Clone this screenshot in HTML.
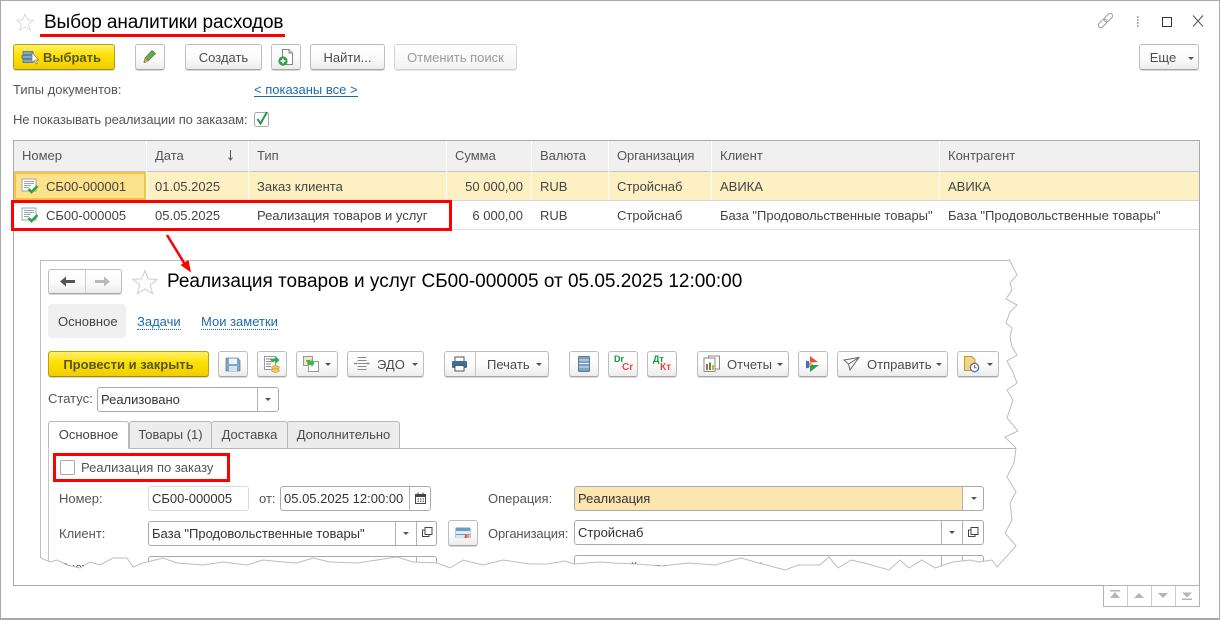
<!DOCTYPE html>
<html lang="ru"><head><meta charset="utf-8"><title>Выбор аналитики расходов</title>
<style>
*{box-sizing:border-box}
html,body{margin:0;padding:0;background:#fff}
body{width:1220px;height:620px;position:relative;overflow:hidden;font:13px/14px "Liberation Sans",Arial,sans-serif;color:#4b4b4b}
.a,.t,.b,.f,.c,.l{position:absolute}
.t{white-space:nowrap}
.b{height:26px;border:1px solid #bdbdbd;border-bottom-color:#a6a6a6;border-radius:3px;background:linear-gradient(#fff 0,#fbfbfb 55%,#ececec 100%);box-shadow:0 1px 0 #d8d8d8;text-align:center;line-height:25px;color:#4b4b4b;white-space:nowrap}
.y{border-color:#b8a112;border-bottom-color:#a08b0c;background:linear-gradient(#fff06a 0,#fee000 45%,#f3cc00 100%);font-weight:bold;color:#55552c}
.f{border:1px solid #aaa;border-radius:3px;background:#fff;height:25px;line-height:24px;padding-left:3px;color:#333;white-space:nowrap;overflow:hidden}
.c{width:1px;background:#b4b4b4}
.l{background:#d6d6d6;height:1px}
.tri{position:absolute;width:0;height:0;border-left:3px solid transparent;border-right:3px solid transparent;border-top:3px solid #555}
.th{top:149px;color:#555}
.r1{top:180px;color:#444}
.r2{top:209px;color:#444}
.tab{position:absolute;top:421px;height:28px;border:1px solid #b8b8b8;border-radius:3px 3px 0 0;background:#ececec;text-align:center;line-height:26px;color:#4b4b4b}
</style></head>
<body>
<svg width="0" height="0" style="position:absolute">
<symbol id="doc" viewBox="0 0 18 16"><rect x="1" y="1" width="14" height="12" fill="#fff" stroke="#98a4ae"/><path d="M3 3.500h10M3 5.500h10M3 7.500h7M3 9.500h5" stroke="#98a4ae"/><path d="M7.500 11l3 3L16.500 8" fill="none" stroke="#2aa63c" stroke-width="2.600"/></symbol>
<symbol id="star" viewBox="0 0 24 24"><path d="M12 1.500l3 7.600 8.200.5-6.400 5.200 2.200 8-7-4.400-7 4.400 2.200-8L.8 9.600 9 9.100z" fill="#fff" stroke="#d4d4d4" stroke-width="1.100"/></symbol>
<symbol id="popup" viewBox="0 0 12 12"><path d="M4 1.500h7v7H4zM4 4H1.500v6.500H8V8.500" fill="none" stroke="#444"/></symbol>
</svg>

<div class="a" style="left:0;top:0;width:1220px;height:620px;border:1px solid #a9a9a9;border-bottom-width:2px"></div>

<svg class="a" style="left:16px;top:13px" width="18" height="18"><use href="#star"/></svg>
<div class="t" style="left:44px;top:12px;font-size:19px;line-height:21px;color:#000;letter-spacing:-.12px">Выбор аналитики расходов</div>
<div class="a" style="left:40px;top:34px;width:245px;height:3px;background:#f00"></div>

<svg class="a" style="left:1095px;top:10px" width="115" height="22" fill="none">
<g transform="rotate(-45 10.500 10.500)" stroke="#9a9a9a"><rect x="1.500" y="8" width="10" height="5" rx="2.500"/><rect x="9.500" y="8" width="10" height="5" rx="2.500"/></g>
<path d="M42 7h1.500M42 10h1.500M42 13h1.500M42 16h1.500" stroke="#8a8a8a" stroke-width="1.400"/>
<rect x="67.500" y="7.500" width="9" height="9" stroke="#333"/>
<path d="M98 5.500l10 11M108 5.500l-10 11" stroke="#555"/>
</svg>

<!-- top toolbar -->
<div class="b y" style="left:13px;top:44px;width:102px;padding-left:16px">Выбрать</div>
<svg class="a" style="left:20px;top:49px" width="20" height="17"><path d="M3 2.500h10v3H3zM2 6.500h11v3H2zM3 10.500h10v3H3z" fill="#7fa8cc" stroke="#3f7099" stroke-width=".8"/><path d="M12 3.500v10l2.300-2 1.700 3.500 1.400-.7-1.700-3.300h3z" fill="#fff" stroke="#777" stroke-width=".7"/></svg>
<div class="b" style="left:135px;top:44px;width:30px"></div>
<svg class="a" style="left:142px;top:49px" width="16" height="16"><path d="M2 13l1-4 7-7.500 3.500 3L6 12z" fill="#6aa84f" stroke="#4d8237" stroke-width=".7"/><path d="M2 14l1-4.500L6 12.500z" fill="#e9a24a"/><path d="M2 14l.5-1.800 1.300 1.200z" fill="#555"/></svg>
<div class="b" style="left:185px;top:44px;width:77px">Создать</div>
<div class="b" style="left:271px;top:44px;width:30px"></div>
<svg class="a" style="left:277px;top:48px" width="18" height="19"><path d="M5.500 1.500H12l3.500 3.500v11.500h-10z" fill="#fff" stroke="#888"/><path d="M12 1.500V5h3.500" fill="#ddd" stroke="#888"/><circle cx="6" cy="13" r="4.600" fill="#2f9e44"/><path d="M3.500 13h5M6 10.500v5" stroke="#fff" stroke-width="1.500"/></svg>
<div class="b" style="left:310px;top:44px;width:75px">Найти...</div>
<div class="b" style="left:394px;top:44px;width:123px;color:#9c9c9c;border-color:#d2d2d2;box-shadow:0 1px 0 #e6e6e6;background:linear-gradient(#fff,#f3f3f3)">Отменить поиск</div>
<div class="b" style="left:1139px;top:44px;width:60px;padding-right:12px">Еще</div><div class="tri" style="left:1188px;top:57px"></div>

<div class="t" style="left:13px;top:83px;color:#555">Типы документов:</div>
<div class="t" style="left:254px;top:83px;color:#1c6aa8;border-bottom:1px solid #1c6aa8;line-height:13px">&lt; показаны все &gt;</div>
<div class="t" style="left:13px;top:113px;color:#555;letter-spacing:-.1px">Не показывать реализации по заказам:</div>
<svg class="a" style="left:254px;top:110px" width="17" height="18"><rect x=".5" y="2.500" width="14" height="14" rx="2" fill="#fff" stroke="#aaa"/><path d="M3.500 9l3 4.500L13 2" fill="none" stroke="#1f9a47" stroke-width="2"/></svg>

<!-- table -->
<div class="a" style="left:13px;top:140px;width:1187px;height:446px;border:1px solid #a9a9a9"></div>
<div class="a" style="left:14px;top:141px;width:1185px;height:30px;background:#f0f0f0"></div>
<div class="a" style="left:14px;top:171px;width:1185px;height:1px;background:#c6c6c6"></div>
<div class="a" style="left:14px;top:172px;width:1185px;height:28px;background:#fdf0c2"></div>
<div class="a" style="left:14px;top:172px;width:132px;height:28px;background:#fde28c;border:2px solid #f5c53f"></div>
<div class="l" style="left:14px;top:200px;width:1185px"></div>
<div class="l" style="left:14px;top:229px;width:1185px;background:#dfdfdf"></div>
<div class="a" style="left:146px;top:141px;width:1px;height:59px;background:#fff"></div>
<div class="a" style="left:248px;top:141px;width:1px;height:59px;background:#fff"></div>
<div class="a" style="left:446px;top:141px;width:1px;height:59px;background:#fff"></div>
<div class="a" style="left:531px;top:141px;width:1px;height:59px;background:#fff"></div>
<div class="a" style="left:608px;top:141px;width:1px;height:59px;background:#fff"></div>
<div class="a" style="left:711px;top:141px;width:1px;height:59px;background:#fff"></div>
<div class="a" style="left:939px;top:141px;width:1px;height:59px;background:#fff"></div>

<div class="t th" style="left:22px">Номер</div>
<div class="t th" style="left:155px">Дата</div>
<svg class="a" style="left:226px;top:149px" width="9" height="13"><path d="M4.500 1v10M2.500 8.500l2 2.500 2-2.500" fill="none" stroke="#555"/></svg>
<div class="t th" style="left:257px">Тип</div>
<div class="t th" style="left:455px">Сумма</div>
<div class="t th" style="left:540px">Валюта</div>
<div class="t th" style="left:617px;letter-spacing:-.1px">Организация</div>
<div class="t th" style="left:720px">Клиент</div>
<div class="t th" style="left:948px">Контрагент</div>

<svg class="a" style="left:21px;top:178px" width="18" height="16"><use href="#doc"/></svg>
<div class="t r1" style="left:46px">СБ00-000001</div>
<div class="t r1" style="left:155px">01.05.2025</div>
<div class="t r1" style="left:257px">Заказ клиента</div>
<div class="t r1" style="right:697px">50 000,00</div>
<div class="t r1" style="left:540px">RUB</div>
<div class="t r1" style="left:617px">Стройснаб</div>
<div class="t r1" style="left:720px">АВИКА</div>
<div class="t r1" style="left:948px">АВИКА</div>

<svg class="a" style="left:21px;top:207px" width="18" height="16"><use href="#doc"/></svg>
<div class="t r2" style="left:46px">СБ00-000005</div>
<div class="t r2" style="left:155px">05.05.2025</div>
<div class="t r2" style="left:257px">Реализация товаров и услуг</div>
<div class="t r2" style="right:697px">6 000,00</div>
<div class="t r2" style="left:540px">RUB</div>
<div class="t r2" style="left:617px">Стройснаб</div>
<div class="t r2" style="left:720px">База "Продовольственные товары"</div>
<div class="t r2" style="left:948px">База "Продовольственные товары"</div>

<div class="a" style="left:11px;top:200px;width:441px;height:31px;border:3px solid #f00"></div>

<!-- pager -->
<div class="a" style="left:1103px;top:585px;width:97px;height:22px;border:1px solid #b4b4b4;background:#fff"></div>
<div class="c" style="left:1127px;top:586px;height:20px;background:#ccc"></div>
<div class="c" style="left:1151px;top:586px;height:20px;background:#ccc"></div>
<div class="c" style="left:1175px;top:586px;height:20px;background:#ccc"></div>
<svg class="a" style="left:1104px;top:586px" width="96" height="20" fill="#b5b5b5"><path d="M6 4h10v1.500H6zM11 6l5 6H6zM35 7l5 5H30zM54 7h10l-5 5zM78 6.500h10l-5 5zM78 12.500h10V14H78z"/></svg>

<!-- inner window -->
<div class="a" id="inner" style="left:0;top:0;width:1220px;height:620px;clip-path:polygon(41px 261px,1009px 259px,1013px 267px,1017px 275px,1010px 283px,1012px 290px,1006px 299px,1017px 305px,1010px 312px,1006px 323px,1012px 328px,1010px 337px,1012px 347px,1017px 355px,1007px 361px,1013px 372px,1017px 383px,1007px 390px,1013px 400px,1007px 418px,1018px 431px,1005px 437px,1016px 448px,1014px 463px,1007px 477px,1016px 492px,1010px 503px,1012px 520px,1005px 533px,1016px 546px,997px 567px,992px 560px,979px 562px,970px 560px,953px 562px,935px 568px,922px 560px,909px 568px,900px 560px,889px 570px,864px 563px,851px 560px,838px 568px,829px 557px,820px 565px,798px 565px,785px 570px,759px 563px,741px 558px,715px 565px,688px 563px,662px 566px,636px 564px,614px 563px,600px 562px,587px 563px,574px 564px,565px 561px,548px 564px,530px 564px,503px 560px,483px 565px,463px 560px,450px 568px,437px 563px,413px 562px,397px 557px,377px 560px,357px 563px,330px 562px,313px 558px,297px 563px,283px 562px,263px 560px,247px 565px,223px 562px,203px 565px,177px 563px,163px 558px,143px 563px,133px 567px,127px 558px,113px 558px,100px 565px,90px 562px,80px 568px,67px 565px,57px 560px,50px 562px,41px 558px)">
<div class="a" style="left:0;top:0;width:1220px;height:620px;background:#fff"></div>

<div class="b" style="left:48px;top:269px;width:74px;height:25px"></div>
<div class="c" style="left:85px;top:270px;height:23px;background:#ccc"></div>
<svg class="a" style="left:58px;top:275px" width="60" height="13"><path d="M2 6.500l6-5v3.500h9v3H8v3.500z" fill="#555"/><path d="M52 6.500l-6-5v3.500h-9v3h9v3.500z" fill="#b8b8b8"/></svg>
<svg class="a" style="left:132px;top:269px" width="26" height="26"><use href="#star"/></svg>
<div class="t" style="left:167px;top:271px;font-size:19px;line-height:22px;color:#000">Реализация товаров и услуг СБ00-000005 от 05.05.2025 12:00:00</div>

<div class="a" style="left:48px;top:304px;width:78px;height:34px;background:#f0f0f0;border-radius:4px"></div>
<div class="t" style="left:58px;top:315px;color:#444">Основное</div>
<div class="t" style="left:137px;top:315px;color:#1c6aa8;border-bottom:1px dotted #1c6aa8">Задачи</div>
<div class="t" style="left:201px;top:315px;color:#1c6aa8;border-bottom:1px dotted #1c6aa8">Мои заметки</div>

<!-- doc toolbar -->
<div class="b y" style="left:48px;top:351px;width:161px">Провести и закрыть</div>
<div class="b" style="left:218px;top:351px;width:30px"></div>
<svg class="a" style="left:225px;top:356px" width="16" height="16"><path d="M1 2h11.500L15 4.500V15H1z" fill="#7ea6c9" stroke="#5a86ab" stroke-width=".8"/><rect x="4" y="2.500" width="8" height="5.500" fill="#eef3f8"/><rect x="4" y="10" width="8" height="5" fill="#d7e1ea"/></svg>
<div class="b" style="left:257px;top:351px;width:30px"></div>
<svg class="a" style="left:263px;top:355px" width="18" height="19"><rect x="1.500" y="1.500" width="11" height="13" fill="#fff" stroke="#999"/><path d="M3 4h8M3 6.500h8M3 9h5M3 11.500h5" stroke="#888"/><ellipse cx="12.500" cy="12.500" rx="4" ry="1.800" fill="#f0c95a" stroke="#c09b2c" stroke-width=".6"/><ellipse cx="12.500" cy="15.500" rx="4" ry="1.800" fill="#f0c95a" stroke="#c09b2c" stroke-width=".6"/><path d="M6 3.500h6.500V1l4 4-4 4V6.500H9" fill="#2fae56"/></svg>
<div class="b" style="left:296px;top:351px;width:42px"></div>
<svg class="a" style="left:302px;top:355px" width="18" height="18"><rect x="1.500" y="1.500" width="9" height="9" fill="#f1e6c4" stroke="#999"/><rect x="6.500" y="6.500" width="10" height="10" fill="#fff" stroke="#999"/><path d="M4 5h4l1.500 2V4l3 4-3 4.500V10H6z" fill="#3cb54a"/></svg>
<div class="tri" style="left:325px;top:363px"></div>
<div class="b" style="left:347px;top:351px;width:77px"></div><div class="t" style="left:377px;top:358px">ЭДО</div>
<svg class="a" style="left:353px;top:356px" width="17" height="16" fill="none" stroke="#8a8a8a"><path d="M4.500 1.500h9M4.500 4.500h9M4.500 7.500h9M4.500 10.500h9M4.500 13.500h9"/><path d="M1 7.500h3M13.500 7.500h3" stroke-width="1.500"/></svg>
<div class="tri" style="left:412px;top:363px"></div>
<div class="b" style="left:444px;top:351px;width:105px"></div><div class="t" style="left:487px;top:358px">Печать</div>
<div class="c" style="left:475px;top:352px;height:24px;background:#c6c6c6"></div>
<svg class="a" style="left:451px;top:356px" width="17" height="16"><rect x="4" y="1" width="9" height="5" fill="#fff" stroke="#555"/><rect x="1" y="5" width="15" height="7" rx="1" fill="#3e6f98"/><rect x="4" y="9.500" width="9" height="5.500" fill="#fff" stroke="#555"/></svg>
<div class="tri" style="left:536px;top:363px"></div>
<div class="b" style="left:569px;top:351px;width:30px"></div>
<svg class="a" style="left:578px;top:356px" width="12" height="16"><rect x=".5" y=".5" width="11" height="15" rx="1" fill="#7fa2bd" stroke="#54799a"/><path d="M1 4h10M1 7.500h10M1 11h10" stroke="#dfe9f1"/></svg>
<div class="b" style="left:608px;top:351px;width:30px"></div>
<div class="t" style="left:614px;top:354px;font-size:9px;line-height:10px;font-weight:bold;color:#0f9b3c">Dr</div>
<div class="t" style="left:622px;top:362px;font-size:10px;line-height:11px;font-weight:bold;color:#f04545">Cr</div>
<div class="b" style="left:647px;top:351px;width:30px"></div>
<div class="t" style="left:653px;top:354px;font-size:9px;line-height:10px;font-weight:bold;color:#0f9b3c">Дт</div>
<div class="t" style="left:660px;top:362px;font-size:10px;line-height:11px;font-weight:bold;color:#f04545">Кт</div>
<div class="b" style="left:697px;top:351px;width:92px"></div><div class="t" style="left:727px;top:358px">Отчеты</div>
<svg class="a" style="left:703px;top:355px" width="18" height="18"><rect x="5.500" y="1" width="11" height="13" fill="#fff" stroke="#8a8a8a"/><rect x="1" y="3" width="11" height="13.500" fill="#fff" stroke="#8a8a8a"/><rect x="3" y="9" width="2" height="6" fill="#e0533d"/><rect x="6" y="7.500" width="2" height="7.500" fill="#2ca24b"/><rect x="9" y="10" width="2" height="5" fill="#e8a53a"/></svg>
<div class="tri" style="left:777px;top:363px"></div>
<div class="b" style="left:798px;top:351px;width:30px"></div>
<svg class="a" style="left:805px;top:355px" width="16" height="18"><path d="M5 1l8 6-8 .5z" fill="#ef4e3a"/><path d="M1 5.500l7 4-7 4z" fill="#7b46c2"/><path d="M5 10h9l-9 7z" fill="#24a14f"/><path d="M4 7l4 2.500-4 2.500z" fill="#f0a02c"/><path d="M1 6h3v7H1z" fill="#2f74c8" opacity=".85"/></svg>
<div class="b" style="left:837px;top:351px;width:111px"></div><div class="t" style="left:867px;top:358px">Отправить</div>
<svg class="a" style="left:843px;top:356px" width="18" height="16" fill="none" stroke="#666"><path d="M1 4l15-2.500L7 14 5.500 8zM5.500 8L16 1.500"/></svg>
<div class="tri" style="left:936px;top:363px"></div>
<div class="b" style="left:957px;top:351px;width:42px"></div>
<svg class="a" style="left:963px;top:355px" width="18" height="18"><path d="M1.500 1.500h7.500l3 3v11H1.500z" fill="#f0d682" stroke="#bd9c3b"/><circle cx="11.500" cy="12.500" r="4.200" fill="#fff" stroke="#4a75a8" stroke-width="1.300"/><path d="M11.500 10v2.700h2" stroke="#d8453a" fill="none"/></svg>
<div class="tri" style="left:987px;top:363px"></div>

<div class="t" style="left:48px;top:392px;color:#555">Статус:</div>
<div class="f" style="left:97px;top:387px;width:182px">Реализовано</div>
<div class="c" style="left:257px;top:388px;height:23px"></div>
<div class="tri" style="left:265px;top:398px"></div>

<!-- tabs -->
<div class="a" style="left:48px;top:448px;width:972px;height:1px;background:#b8b8b8"></div>
<div class="a" style="left:48px;top:448px;width:1px;height:120px;background:#c4c4c4"></div>
<div class="tab" style="left:129px;width:83px">Товары (1)</div>
<div class="tab" style="left:211px;width:77px">Доставка</div>
<div class="tab" style="left:287px;width:113px">Дополнительно</div>
<div class="tab" style="left:48px;width:81px;background:#fff;border-bottom-color:#fff;z-index:2;color:#444">Основное</div>

<div class="a" style="left:60px;top:460px;width:15px;height:15px;border:1px solid #aaa;border-radius:2px;background:#fff"></div>
<div class="t" style="left:81px;top:461px;color:#555">Реализация по заказу</div>
<div class="a" style="left:53px;top:453px;width:177px;height:29px;border:3px solid #f00"></div>

<div class="t" style="left:59px;top:492px;color:#555">Номер:</div>
<div class="f" style="left:148px;top:486px;width:101px;border-color:#dadada">СБ00-000005</div>
<div class="t" style="left:259px;top:492px;color:#555">от:</div>
<div class="f" style="left:280px;top:486px;width:151px">05.05.2025 12:00:00</div>
<div class="c" style="left:409px;top:487px;height:23px"></div>
<svg class="a" style="left:415px;top:492px" width="12" height="12"><path d="M.5 2.500h10v9H.5z" fill="#fff" stroke="#444"/><path d="M.5 2h10v3H.5z" fill="#444"/><path d="M3 .5v2M8 .5v2" stroke="#444"/><path d="M2.500 7h1.500M5 7h1.500M7.500 7h1.500M2.500 9.300h1.500M5 9.300h1.500M7.500 9.300h1.500" stroke="#444"/></svg>

<div class="t" style="left:488px;top:492px;color:#555">Операция:</div>
<div class="f" style="left:574px;top:486px;width:410px;background:linear-gradient(90deg,#fde5b0 0,#fde5b0 388px,#fff 388px)">Реализация</div>
<div class="c" style="left:962px;top:487px;height:23px"></div>
<div class="tri" style="left:971px;top:497px"></div>

<div class="t" style="left:59px;top:527px;color:#555">Клиент:</div>
<div class="f" style="left:148px;top:521px;width:289px">База "Продовольственные товары"</div>
<div class="c" style="left:395px;top:522px;height:23px"></div>
<div class="c" style="left:416px;top:522px;height:23px"></div>
<div class="tri" style="left:403px;top:532px"></div>
<svg class="a" style="left:421px;top:526px" width="12" height="12"><use href="#popup"/></svg>
<div class="b" style="left:448px;top:520px;width:30px;height:26px"></div>
<svg class="a" style="left:455px;top:527px" width="16" height="12"><rect x=".5" y=".5" width="15" height="11" rx="1" fill="#6d9bc6"/><rect x="1" y="4" width="14" height="3" fill="#dfe9f2"/><rect x="1" y="8" width="14" height="3.500" fill="#dfe7ee"/><circle cx="11" cy="9.500" r="1.500" fill="#e0463a"/><circle cx="13" cy="9.500" r="1.500" fill="#f0a030"/></svg>

<div class="t" style="left:488px;top:527px;color:#555;letter-spacing:-.15px">Организация:</div>
<div class="f" style="left:574px;top:520px;width:410px">Стройснаб</div>
<div class="c" style="left:941px;top:521px;height:23px"></div>
<div class="c" style="left:962px;top:521px;height:23px"></div>
<div class="tri" style="left:949px;top:531px"></div>
<svg class="a" style="left:967px;top:526px" width="12" height="12"><use href="#popup"/></svg>

<div class="t" style="left:59px;top:561px;color:#555">Счет:</div>
<div class="f" style="left:148px;top:556px;width:289px">Банк "Продовольственные"</div>
<div class="c" style="left:395px;top:557px;height:23px"></div>
<div class="c" style="left:416px;top:557px;height:23px"></div>
<div class="t" style="left:488px;top:561px;color:#555">Подразделение:</div>
<div class="f" style="left:574px;top:555px;width:410px">Основной отдел складов (Пол)</div>
<div class="c" style="left:941px;top:556px;height:23px"></div>
<div class="c" style="left:962px;top:556px;height:23px"></div>
</div>

<svg class="a" style="left:0;top:0" width="1220" height="620" fill="none">
<path stroke="#bdbdbd" d="M40.500 558V260.500H1009"/>
<polyline stroke="#bdbdbd" points="1009,259 1013,267 1017,275 1010,283 1012,290 1006,299 1017,305 1010,312 1006,323 1012,328 1010,337 1012,347 1017,355 1007,361 1013,372 1017,383 1007,390 1013,400 1007,418 1018,431 1005,437 1016,448 1014,463 1007,477 1016,492 1010,503 1012,520 1005,533 1016,546 997,567 992,560 979,562 970,560 953,562 935,568 922,560 909,568 900,560 889,570 864,563 851,560 838,568 829,557 820,565 798,565 785,570 759,563 741,558 715,565 688,563 662,566 636,564 614,563 600,562 587,563 574,564 565,561 548,564 530,564 503,560 483,565 463,560 450,568 437,563 413,562 397,557 377,560 357,563 330,562 313,558 297,563 283,562 263,560 247,565 223,562 203,565 177,563 163,558 143,563 133,567 127,558 113,558 100,565 90,562 80,568 67,565 57,560 50,562 41,558"/>
<path d="M167 235L186 266" stroke="#f00" stroke-width="2.500"/>
<path d="M191 272.500L180.500 265 188.500 260z" fill="#f00"/>
</svg>
</body></html>
